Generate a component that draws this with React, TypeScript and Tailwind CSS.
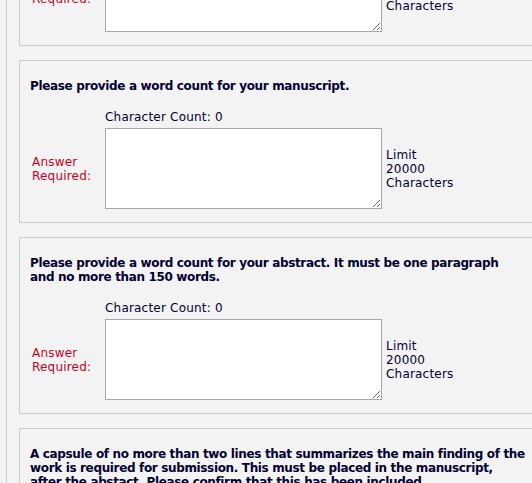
const questions = [
  { title: "Please provide the title of your manuscript." },
  { title: "Please provide a word count for your manuscript." },
  {
    title:
      "Please provide a word count for your abstract. It must be one paragraph and no more than 150 words.",
  },
];

function Question({ title }: { title: string }) {
  return (
    <div className="border border-[#cccccc] bg-[#f3f3f3] pt-[18px] pb-[13px] pl-[10px]">
      <p className="w-[496px] font-bold leading-[14px] tracking-[-0.35px]">{title}</p>
      <div className="mt-[17px] ml-[75px] leading-[14px]">Character Count: 0</div>
      <div className="mt-[4px] flex items-center">
        <div className="w-[75px] pl-[2px] leading-[14px] text-[#cc0022]">
          Answer
          <br />
          Required:
        </div>
        <textarea className="block h-[81px] w-[277px] resize border border-[#a9a9a9] bg-white" />
        <div className="ml-[4px] leading-[14px]">
          Limit
          <br />
          20000
          <br />
          Characters
        </div>
      </div>
    </div>
  );
}

export default function App() {
  return (
    <div className="h-[483px] overflow-hidden bg-[#f3f3f3] pl-[6px] font-['DejaVu_Sans',sans-serif] text-[12px] tracking-[0.2px] text-[#000033]">
      <div className="flex h-full flex-col border-l border-[#cccccc] pl-[12px]">
        <div className="-mt-[117px] flex w-[560px] flex-col gap-[14px]">
          {questions.map((q) => (
            <Question key={q.title} title={q.title} />
          ))}
          <div className="border border-[#cccccc] bg-[#f3f3f3] pt-[18px] pb-[13px] pl-[10px]">
            <p className="w-[496px] font-bold leading-[14px] tracking-[-0.35px]">
              A capsule of no more than two lines that summarizes the main finding of the
              work is required for submission. This must be placed in the manuscript,
              after the abstact. Please confirm that this has been included.
            </p>
          </div>
        </div>
      </div>
    </div>
  );
}
